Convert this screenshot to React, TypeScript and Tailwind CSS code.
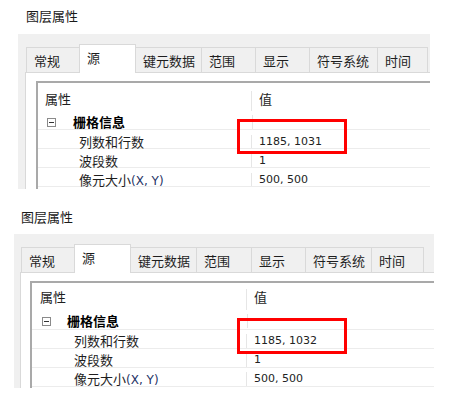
import React from "react";

type Tab = { label: string; w: string };

type PanelCfg = {
  titleBox: string;
  panelBox: string;
  contentPad: string;
  leftCol: string;
  headerRow: string;
  headerPl: string;
  groupRow: string;
  iconMl: string;
  groupGap: string;
  dataRow: string;
  labelPl: string;
  tabs: Tab[];
  size: string;
};

const cjk = "font-['Noto_Sans_CJK_SC','Noto_Sans',sans-serif]";
const num = "font-['DejaVu_Sans','Noto_Sans_CJK_SC',sans-serif] text-[11px]";

const panelA: PanelCfg = {
  titleBox: "h-[34px] pl-[26px] pt-[7px]",
  panelBox: "ml-[18px] w-[412px] h-[155px] pl-[7px] pt-[10px]",
  contentPad: "pl-[10px] pt-[8px]",
  leftCol: "w-[214px]",
  headerRow: "h-[28px] pt-[8px]",
  headerPl: "pl-[7px]",
  groupRow: "h-[19px] pt-[4px]",
  iconMl: "ml-[9px]",
  groupGap: "ml-[17px]",
  dataRow: "h-[19px] pt-[5px]",
  labelPl: "pl-[41px]",
  size: "1185, 1031",
  tabs: [
    { label: "常规", w: "w-[53px]" },
    { label: "源", w: "w-[57px]" },
    { label: "键元数据", w: "w-[65px]" },
    { label: "范围", w: "w-[54px]" },
    { label: "显示", w: "w-[54px]" },
    { label: "符号系统", w: "w-[68px]" },
    { label: "时间", w: "w-[51px]" },
  ],
};

const panelB: PanelCfg = {
  titleBox: "h-[45px] pl-[21px] pt-[19px]",
  panelBox: "ml-[14px] w-[420px] h-[154px] pl-[6px] pt-[10px]",
  contentPad: "pl-[9px] pt-[8px]",
  leftCol: "w-[215px]",
  headerRow: "h-[27px] pt-[6px]",
  headerPl: "pl-[8px]",
  groupRow: "h-[20px] pt-[4px]",
  iconMl: "ml-[10px]",
  groupGap: "ml-[16px]",
  dataRow: "h-[19px] pt-[4px]",
  labelPl: "pl-[42px]",
  size: "1185, 1032",
  tabs: [
    { label: "常规", w: "w-[53px]" },
    { label: "源", w: "w-[57px]" },
    { label: "键元数据", w: "w-[65px]" },
    { label: "范围", w: "w-[55px]" },
    { label: "显示", w: "w-[54px]" },
    { label: "符号系统", w: "w-[66px]" },
    { label: "时间", w: "w-[53px]" },
  ],
};

function Tabs({ tabs }: { tabs: Tab[] }) {
  const active = 1;
  return (
    <div className="flex h-[28px] items-end pl-[1px]">
      {tabs.map((t, i) => {
        const isActive = i === active;
        const last = i === tabs.length - 1;
        return (
          <div
            key={t.label}
            className={[
              t.w,
              "flex items-start pl-[7px] pt-[4px] text-[13px] leading-[18px] text-[#1e1e1e] border-t border-[#d9d9d9]",
              i === active + 1 ? "" : "border-l",
              isActive
                ? "relative z-10 -mb-px h-[29px] border-r bg-white"
                : "h-[25px] bg-[#f0f0f0]",
              last ? "border-r" : "",
            ].join(" ")}
          >
            {t.label}
          </div>
        );
      })}
    </div>
  );
}

function Panel({ cfg }: { cfg: PanelCfg }) {
  const rows: { label: React.ReactNode; value: string }[] = [
    { label: "列数和行数", value: cfg.size },
    { label: "波段数", value: "1" },
    {
      label: (
        <>
          像元大小
          <span className="font-['DejaVu_Sans',sans-serif] text-[12px] text-[#1f3566]">(X, Y)</span>
        </>
      ),
      value: "500, 500",
    },
  ];

  return (
    <div className={cjk}>
      <div className={cfg.titleBox + " text-[13px] leading-[18px] text-[#1a1a1a]"}>
        图层属性
      </div>
      <div className={cfg.panelBox + " flex flex-col bg-[#f0f0f0]"}>
        <Tabs tabs={cfg.tabs} />
        <div className={cfg.contentPad + " flex flex-1 flex-col border-l border-t border-[#d9d9d9] bg-white"}>
          <div className="flex-1 border-l-2 border-t-2 border-[#a9a9a9] text-[13px] text-[#1e1e1e]">
            {/* header */}
            <div className={cfg.headerRow + " flex"}>
              <div className={cfg.leftCol + " " + cfg.headerPl + " border-r border-[#e6e6e6] leading-[16px]"}>
                属性
              </div>
              <div className="pl-[7px] leading-[16px]">值</div>
            </div>

            {/* group */}
            <div className={cfg.groupRow + " flex border-b border-[#ececec]"}>
              <div className={cfg.leftCol + " flex items-center border-r border-[#e6e6e6] h-[14px] box-content"}>
                <div className={cfg.iconMl + " flex h-[9px] w-[9px] items-center justify-center border border-[#8a8a8a]"}>
                  <div className="h-px w-[5px] bg-[#333]" />
                </div>
                <span className={cfg.groupGap + " font-bold leading-[14px] text-black"}>栅格信息</span>
              </div>
            </div>

            {rows.map((r, i) => (
              <div key={i} className={cfg.dataRow + " flex border-b border-[#ececec]"}>
                <div className={cfg.leftCol + " " + cfg.labelPl + " border-r border-[#e6e6e6] leading-[13px] whitespace-nowrap"}>
                  {r.label}
                </div>
                <div className={num + " pl-[7px] leading-[13px] text-[#222]"}>{r.value}</div>
              </div>
            ))}
          </div>
        </div>
      </div>
    </div>
  );
}

export default function App() {
  return (
    <div className="relative h-[416px] w-[451px] overflow-hidden bg-white">
      <Panel cfg={panelA} />
      <Panel cfg={panelB} />

      {/* red highlight boxes */}
      <div className="absolute left-[237px] top-[119px] h-[35px] w-[110px] border-[3px] border-[#ff0000]" />
      <div className="absolute left-[237px] top-[318px] h-[36px] w-[110px] border-[3px] border-[#ff0000]" />
    </div>
  );
}
